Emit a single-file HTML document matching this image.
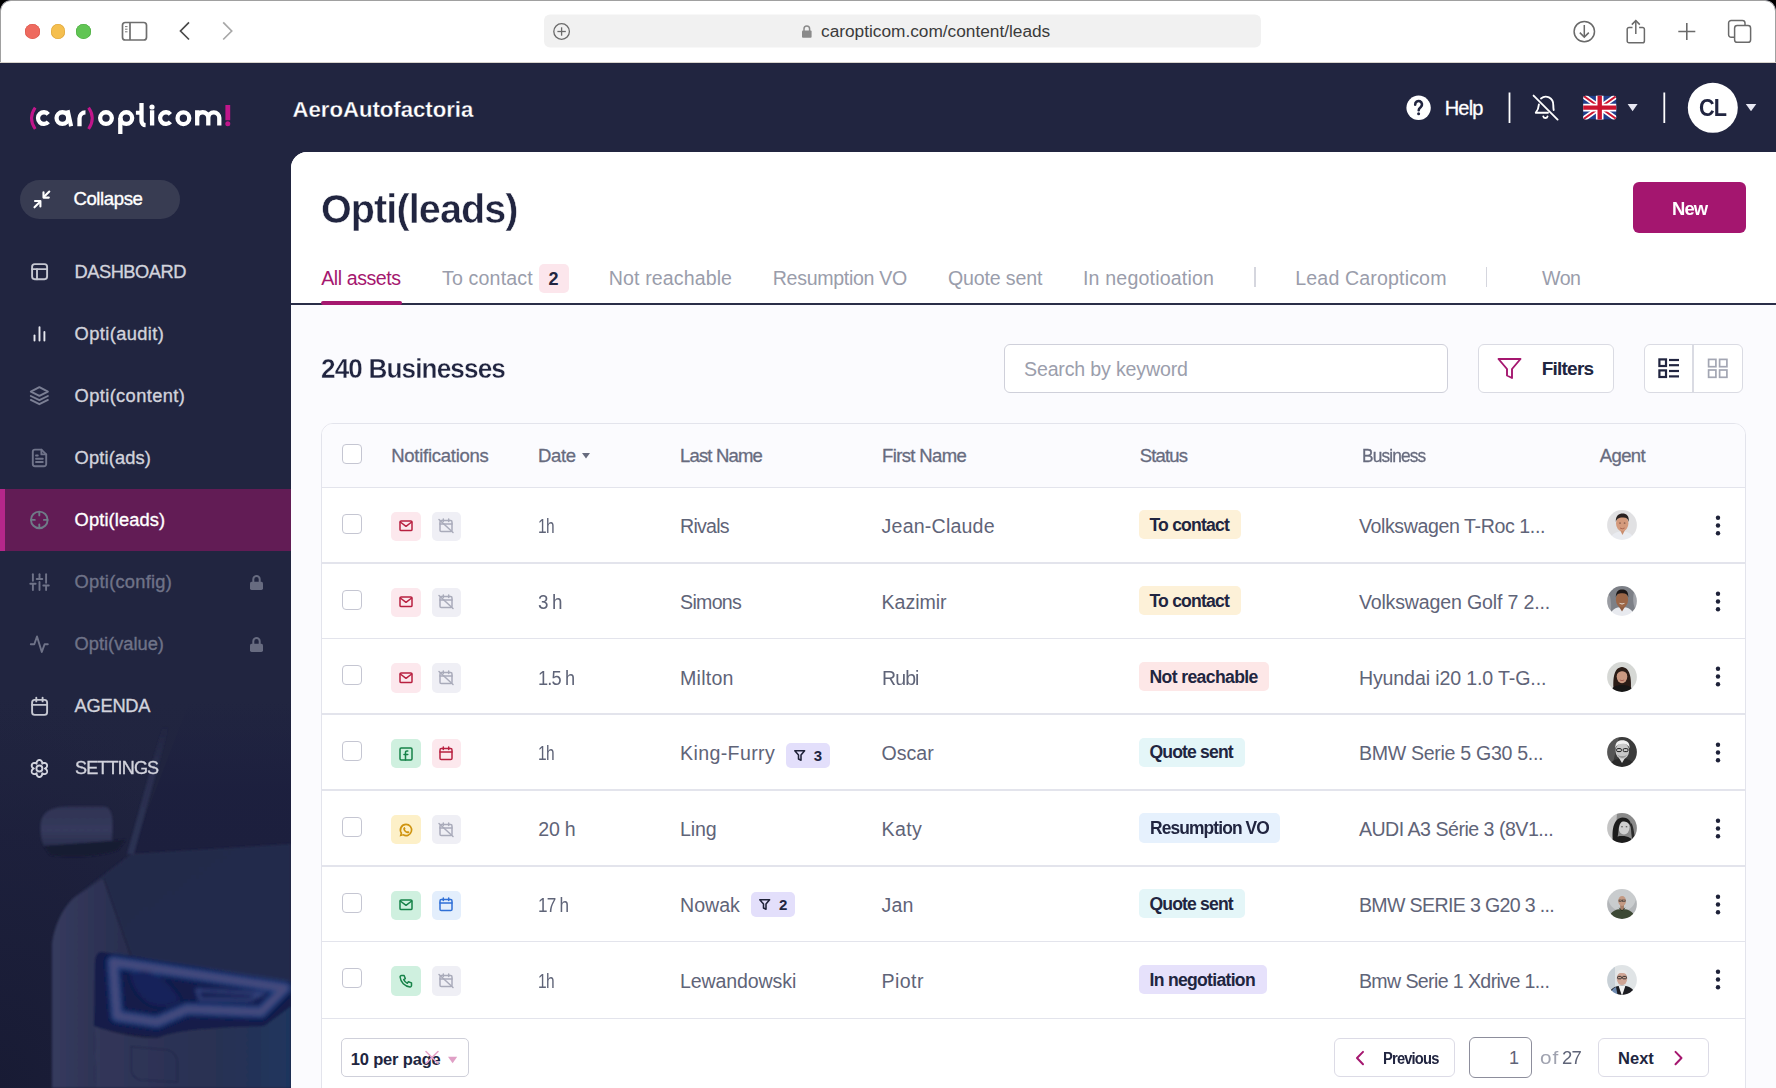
<!DOCTYPE html>
<html><head><meta charset="utf-8">
<style>
*{box-sizing:border-box;margin:0;padding:0}
html,body{width:1776px;height:1088px;overflow:hidden;background:#000;font-family:"Liberation Sans",sans-serif}
.a{position:absolute}
.t{position:absolute;white-space:nowrap}
svg{position:absolute;overflow:visible}
</style></head><body>
<div class="a" style="left:0;top:0;width:1776px;height:1088px;background:#212540;border-radius:11px 11px 0 0;overflow:hidden">

<div class="a" style="left:0;top:0;width:1776px;height:63px;background:#fff;border-radius:11px 11px 0 0;border:1px solid #a0a0a0;border-bottom:none"></div>
<div class="a" style="left:0;top:62px;width:1776px;height:1px;background:#d8d4cc"></div>
<div class="a" style="left:25.4px;top:24px;width:14.6px;height:14.6px;border-radius:50%;background:#ee6a5f;box-shadow:inset 0 0 0 0.6px #d9574c"></div>
<div class="a" style="left:50.7px;top:24px;width:14.6px;height:14.6px;border-radius:50%;background:#f5bf4f;box-shadow:inset 0 0 0 0.6px #dca53c"></div>
<div class="a" style="left:76.2px;top:24px;width:14.6px;height:14.6px;border-radius:50%;background:#61c554;box-shadow:inset 0 0 0 0.6px #4dab42"></div>
<svg style="left:0;top:0" width="1776" height="62"><rect x="122.5" y="22.5" width="24" height="17.5" rx="2.8" fill="none" stroke="#6e6e6e" stroke-width="1.7"/><line x1="130" y1="22.5" x2="130" y2="40" stroke="#6e6e6e" stroke-width="1.7"/><line x1="125" y1="26.6" x2="127.5" y2="26.6" stroke="#777" stroke-width="1"/><line x1="125" y1="29.2" x2="127.5" y2="29.2" stroke="#777" stroke-width="1"/><line x1="125" y1="31.8" x2="127.5" y2="31.8" stroke="#777" stroke-width="1"/><polyline points="189,22.3 180.5,31 189,39.5" fill="none" stroke="#4a4a4a" stroke-width="1.7"/><polyline points="223.2,22.3 231.7,31 223.2,39.5" fill="none" stroke="#a8a8a8" stroke-width="1.7"/><rect x="544" y="14.5" width="717" height="33" rx="6" fill="#f1f1f1"/><circle cx="561.6" cy="31.5" r="7.8" fill="none" stroke="#6a6a6a" stroke-width="1.3"/><line x1="561.6" y1="27.3" x2="561.6" y2="35.7" stroke="#6a6a6a" stroke-width="1.3"/><line x1="557.4" y1="31.5" x2="565.8" y2="31.5" stroke="#6a6a6a" stroke-width="1.3"/><path d="M804 31 v-2.2 a2.8 2.8 0 0 1 5.6 0 v2.2" fill="none" stroke="#8a8a8a" stroke-width="1.5"/><rect x="802" y="30.5" width="9.6" height="7.3" rx="1" fill="#8a8a8a"/><circle cx="1584.3" cy="31.6" r="10.2" fill="none" stroke="#6a6a6a" stroke-width="1.5"/><line x1="1584.3" y1="25" x2="1584.3" y2="37" stroke="#6a6a6a" stroke-width="1.5"/><polyline points="1579.8,32.6 1584.3,37.1 1588.8,32.6" fill="none" stroke="#6a6a6a" stroke-width="1.5"/><path d="M1632.5 27.5 h-3.5 a1.8 1.8 0 0 0 -1.8 1.8 v11.6 a1.8 1.8 0 0 0 1.8 1.8 h13.6 a1.8 1.8 0 0 0 1.8 -1.8 v-11.6 a1.8 1.8 0 0 0 -1.8 -1.8 h-3.5" fill="none" stroke="#6a6a6a" stroke-width="1.5"/><line x1="1635.8" y1="20.8" x2="1635.8" y2="34" stroke="#6a6a6a" stroke-width="1.5"/><polyline points="1631.8,24.6 1635.8,20.6 1639.8,24.6" fill="none" stroke="#6a6a6a" stroke-width="1.5"/><line x1="1686.8" y1="23" x2="1686.8" y2="40" stroke="#6a6a6a" stroke-width="1.6"/><line x1="1678.3" y1="31.5" x2="1695.3" y2="31.5" stroke="#6a6a6a" stroke-width="1.6"/><path d="M1734.6 37.3 H1731.2 a2.6 2.6 0 0 1 -2.6 -2.6 V23 a2.6 2.6 0 0 1 2.6 -2.6 H1742.4 a2.6 2.6 0 0 1 2.6 2.6 V25.6" fill="none" stroke="#6a6a6a" stroke-width="1.5"/><rect x="1734.6" y="25.6" width="16" height="16.7" rx="2.6" fill="none" stroke="#6a6a6a" stroke-width="1.5"/><path d="M1729 38 v-12" fill="none" stroke="#6a6a6a" stroke-width="0"/></svg>
<div class="t" style="left:821.00px;top:22.96px;font-size:17.3px;line-height:17.3px;color:#3b3b3b;font-weight:400;letter-spacing:-0.012px;">caropticom.com/content/leads</div>
<svg style="left:0;top:0" width="291" height="152"><g fill="none" stroke-width="4.3" stroke-linecap="butt" stroke-linejoin="round"><path d="M35.2 107.6 Q27.8 118.3 35.2 129" stroke="#c0168a" stroke-width="3"/><path d="M48.3 114.3 A5.85 5.85 0 1 0 48.3 121.9" stroke="#fff"/><circle cx="62.4" cy="118.1" r="5.85" stroke="#fff"/><line x1="67.6" y1="110.2" x2="71.1" y2="126.2" stroke="#fff" stroke-width="4.1"/><path d="M79.5 126.2 V118.5 A6 6 0 0 1 85.5 112.3" stroke="#fff"/><path d="M88.6 107.6 Q96 118.3 88.6 129" stroke="#c0168a" stroke-width="3"/><circle cx="106" cy="118.1" r="5.85" stroke="#fff"/><circle cx="126.3" cy="118.1" r="5.85" stroke="#fff"/><line x1="120.3" y1="118" x2="120.3" y2="133.9" stroke="#fff"/><path d="M141.5 102.9 V121 A4.2 4.2 0 0 0 145.6 125.2" stroke="#fff"/><line x1="135.9" y1="112.8" x2="143" y2="112.8" stroke="#fff" stroke-width="4"/><line x1="152.1" y1="110.3" x2="152.1" y2="125.4" stroke="#fff"/><circle cx="152" cy="107" r="2.6" fill="#fff" stroke="none"/><path d="M170.4 114.3 A5.85 5.85 0 1 0 170.4 121.9" stroke="#fff"/><circle cx="183.4" cy="118.2" r="5.85" stroke="#fff"/><path d="M197.2 125.4 V117.8 A5.55 5.55 0 0 1 208.3 117.8 V125.4 M208.3 117.8 A5.5 5.5 0 0 1 219.3 117.8 V125.4 M197.2 110.3 V118" stroke="#fff"/><line x1="227.8" y1="105" x2="227.8" y2="120.3" stroke="#c0168a" stroke-width="4.8"/><circle cx="227.8" cy="123.8" r="2.5" fill="#c0168a" stroke="none"/></g></svg>
<div class="t" style="left:292.50px;top:99.41px;font-size:22.2px;line-height:22.2px;color:#ffffff;font-weight:700;letter-spacing:-0.032px;-webkit-text-stroke:0.3px #212540;">AeroAutofactoria</div>
<svg style="left:0;top:0" width="1776" height="152"><circle cx="1418.6" cy="107.8" r="12.2" fill="#fff"/><path d="M1415.2 104.6 a3.4 3.4 0 1 1 5.6 2.4 c-1.3 1 -2.1 1.5 -2.1 3.3" fill="none" stroke="#212540" stroke-width="2.6" stroke-linecap="round"/><circle cx="1418.6" cy="113.7" r="1.5" fill="#212540"/><line x1="1509.5" y1="92.5" x2="1509.5" y2="123" stroke="#fff" stroke-width="1.8"/><line x1="1664.3" y1="92.5" x2="1664.3" y2="123" stroke="#fff" stroke-width="1.8"/><g fill="none" stroke="#fff" stroke-width="1.9" stroke-linecap="round" stroke-linejoin="round"><line x1="1533.6" y1="95.6" x2="1557.6" y2="119.6"/><path d="M1538.9 104.5 C1538.6 108 1537.8 110.5 1535.8 112.7 H1548"/><path d="M1541 98.4 C1545.5 94.8 1553.6 97 1553.3 105.5 C1553.3 107.5 1553.5 108.8 1553.7 110"/><path d="M1543.3 116.5 a2.2 2.2 0 0 0 4.2 0"/></g><defs><clipPath id="fl"><rect x="1583.2" y="95.8" width="33" height="23.6" rx="2.2"/></clipPath></defs><g clip-path="url(#fl)"><rect x="1583" y="95.5" width="34" height="24" fill="#203f8c"/><path d="M1583 95.5 L1617 119.5 M1617 95.5 L1583 119.5" stroke="#fff" stroke-width="5.2"/><path d="M1583 95.5 L1617 119.5 M1617 95.5 L1583 119.5" stroke="#cc1530" stroke-width="1.9"/><path d="M1599.7 95 V120 M1582 107.6 H1618" stroke="#fff" stroke-width="7.6"/><path d="M1599.7 95 V120 M1582 107.6 H1618" stroke="#cc1530" stroke-width="4.4"/></g><polygon points="1627.6,104 1637.6,104 1632.6,111.3" fill="#e8e8f3"/><circle cx="1712.8" cy="107.8" r="25" fill="#fff"/><polygon points="1745.8,104 1756.3,104 1751,111.3" fill="#e8e8f3"/></svg>
<div class="t" style="left:1444.80px;top:98.27px;font-size:20px;line-height:20px;color:#ffffff;font-weight:400;letter-spacing:-0.867px;-webkit-text-stroke:0.3px #fff;">Help</div>
<div class="t" style="left:1698.70px;top:96.28px;font-size:24px;line-height:24px;color:#212540;font-weight:700;letter-spacing:-0.900px;transform:scaleX(0.9024);transform-origin:0 0;">CL</div>
<svg style="left:0;top:700px" width="291" height="388" viewBox="0 700 291 388">
<defs>
 <linearGradient id="sbg" x1="0" y1="0" x2="0" y2="1"><stop offset="0" stop-color="#212540"/><stop offset="1" stop-color="#1c1f3b"/></linearGradient>
 <linearGradient id="fend" x1="0" y1="0" x2="1" y2="0"><stop offset="0" stop-color="#363b5e"/><stop offset="0.5" stop-color="#2f3456"/><stop offset="1" stop-color="#282d4e"/></linearGradient>
 <linearGradient id="hood" x1="0" y1="0" x2="1" y2="1"><stop offset="0" stop-color="#252a4a"/><stop offset="1" stop-color="#232a4c"/></linearGradient>
 <linearGradient id="bump" x1="0" y1="0" x2="1" y2="0"><stop offset="0" stop-color="#32375a"/><stop offset="0.6" stop-color="#293052"/><stop offset="1" stop-color="#1f365e"/></linearGradient>
 <linearGradient id="mir" x1="0" y1="0" x2="0" y2="1"><stop offset="0" stop-color="#2f3354"/><stop offset="0.6" stop-color="#353a5c"/><stop offset="1" stop-color="#2a2e4e"/></linearGradient>
 <radialGradient id="lft" cx="0" cy="1" r="1.1"><stop offset="0" stop-color="#181b34" stop-opacity="1"/><stop offset="0.6" stop-color="#1c1f3b" stop-opacity="0.7"/><stop offset="1" stop-color="#212540" stop-opacity="0"/></radialGradient>
 <filter id="glow" x="-20%" y="-50%" width="140%" height="200%"><feGaussianBlur stdDeviation="2.2"/></filter>
 <linearGradient id="wsg" x1="0" y1="0" x2="0" y2="1"><stop offset="0" stop-color="#1d2040" stop-opacity="0"/><stop offset="0.6" stop-color="#1c1f3e" stop-opacity="0.9"/><stop offset="1" stop-color="#1c1f3d"/></linearGradient>
 <linearGradient id="pil" x1="0" y1="0" x2="0" y2="1"><stop offset="0" stop-color="#2a2f50" stop-opacity="0"/><stop offset="0.4" stop-color="#2a2f50" stop-opacity="1"/><stop offset="1" stop-color="#2c3152"/></linearGradient>
 <filter id="bl1" x="-20%" y="-20%" width="140%" height="140%"><feGaussianBlur stdDeviation="1.2"/></filter>
 <filter id="bl3" x="-30%" y="-30%" width="160%" height="160%"><feGaussianBlur stdDeviation="3"/></filter>
</defs>
<rect x="0" y="700" width="291" height="388" fill="url(#sbg)"/>
<rect x="0" y="700" width="291" height="388" fill="url(#lft)"/>
<polygon points="190,700 291,700 291,846 131,854" fill="url(#wsg)"/>
<g filter="url(#bl1)">
 <polygon points="131,854 291,844 291,990 132,956 104,878 76,896" fill="url(#hood)"/>
 <path d="M76 896 L104 878 L132 956 L100 952 L94 1026 L96 1088 L52 1088 L52 945 C54 925 64 905 76 896Z" fill="url(#fend)"/>
 <path d="M94 1026 C120 1035 150 1040 160 1037 C175 1032 190 1028 264 1026 L291 1006 L291 1088 L96 1088Z" fill="url(#bump)"/>
 <path d="M100 952 L132 956 L291 982 L291 1006 L264 1026 C190 1028 175 1032 158 1037 C140 1036 110 1032 94 1026 L95 960 C96 955 98 953 100 952Z" fill="#121c4a"/>
 <g filter="url(#glow)"><path d="M113 962 L285 988 L261 1012 L187 1009 L157 1022 L117 1016Z" fill="none" stroke="#1d58a4" stroke-width="13" stroke-linejoin="round" opacity="0.55"/>
 <path d="M113 962 L285 988 L261 1012 L187 1009 L157 1022 L117 1016Z" fill="none" stroke="#444a7c" stroke-width="8" stroke-linejoin="round"/>
 <path d="M130 975 C150 960 175 990 180 1000 C165 1010 140 1010 130 975Z" fill="#14205a"/>
 <path d="M197 990 L262 994 L250 1000 L200 999Z" fill="none" stroke="#3b4a86" stroke-width="3"/></g>
 <path d="M40.5 826 C41 812 50 806.5 70 806.5 L104 806.5 C111 807 113 815 112.5 830 L112 841 L44 846 C41 840 40.5 834 40.5 826Z" fill="url(#mir)"/>
 <path d="M44 846 L112 841 L125.7 839.5 L118 850 C100 857 70 858 50 855Z" fill="#171a33"/>
 <polygon points="163,725 169,725 134,854 127,854" fill="url(#pil)"/>
 <line x1="103.4" y1="877.6" x2="130.7" y2="955.4" stroke="#1a1d36" stroke-width="1"/>
 <path d="M131 1046.6 L168 1050 C175 1052 177.4 1058 177.4 1064 L177.4 1082 L140 1080 C134 1078 131 1074 131 1068Z" fill="none" stroke="#23284a" stroke-width="1.2"/>
</g>
</svg>
<div class="a" style="left:20px;top:180px;width:160px;height:39px;border-radius:20px;background:#383c52"></div>
<svg style="left:27px;top:184px" width="30" height="30" viewBox="0 0 30 30"><g fill="none" stroke="#fff" stroke-width="2.1" stroke-linecap="round" stroke-linejoin="round"><line x1="22.3" y1="7.5" x2="17" y2="12.8"/><polyline points="16.5,8.3 16.5,13.6 21.8,13.6"/><line x1="7.5" y1="23.3" x2="12.8" y2="18"/><polyline points="8,17 13.4,17 13.4,22.4"/></g></svg>
<div class="t" style="left:73.40px;top:190.06px;font-size:18.6px;line-height:18.6px;color:#ffffff;font-weight:400;letter-spacing:-0.408px;-webkit-text-stroke:0.35px #fff;">Collapse</div>
<div class="a" style="left:0;top:489px;width:291px;height:62px;background:#621c55"></div>
<div class="a" style="left:0;top:489px;width:5px;height:62px;background:#b5278a"></div>
<div class="t" style="left:74.60px;top:263.11px;font-size:18.3px;line-height:18.3px;color:#d2d3dc;font-weight:400;letter-spacing:-0.504px;-webkit-text-stroke:0.35px #d2d3dc;">DASHBOARD</div>
<div class="t" style="left:74.60px;top:325.11px;font-size:18.3px;line-height:18.3px;color:#d2d3dc;font-weight:400;letter-spacing:0.394px;-webkit-text-stroke:0.35px #d2d3dc;">Opti(audit)</div>
<div class="t" style="left:74.60px;top:387.11px;font-size:18.3px;line-height:18.3px;color:#d2d3dc;font-weight:400;letter-spacing:0.377px;-webkit-text-stroke:0.35px #d2d3dc;">Opti(content)</div>
<div class="t" style="left:74.60px;top:449.11px;font-size:18.3px;line-height:18.3px;color:#d2d3dc;font-weight:400;letter-spacing:0.148px;-webkit-text-stroke:0.35px #d2d3dc;">Opti(ads)</div>
<div class="t" style="left:74.60px;top:511.11px;font-size:18.3px;line-height:18.3px;color:#ffffff;font-weight:400;letter-spacing:0.121px;-webkit-text-stroke:0.35px #ffffff;">Opti(leads)</div>
<div class="t" style="left:74.60px;top:573.11px;font-size:18.3px;line-height:18.3px;color:#6f7388;font-weight:400;letter-spacing:0.254px;-webkit-text-stroke:0.35px #6f7388;">Opti(config)</div>
<div class="t" style="left:74.60px;top:635.11px;font-size:18.3px;line-height:18.3px;color:#6f7388;font-weight:400;letter-spacing:-0.009px;-webkit-text-stroke:0.35px #6f7388;">Opti(value)</div>
<div class="t" style="left:74.60px;top:697.31px;font-size:18.3px;line-height:18.3px;color:#d2d3dc;font-weight:400;letter-spacing:-0.263px;-webkit-text-stroke:0.35px #d2d3dc;">AGENDA</div>
<div class="t" style="left:74.60px;top:759.31px;font-size:18.3px;line-height:18.3px;color:#d2d3dc;font-weight:400;letter-spacing:-0.900px;transform:scaleX(0.9883);transform-origin:0 0;-webkit-text-stroke:0.35px #d2d3dc;">SETTINGS</div>
<svg style="left:25px;top:255px" width="30" height="30" viewBox="0 0 30 30"><g fill="none" stroke-width="1.9" stroke-linecap="round" stroke-linejoin="round" stroke="#c6c8d2"><rect x="7.1" y="9.1" width="15" height="15.1" rx="2.6"/><line x1="7.1" y1="14.1" x2="22.1" y2="14.1"/><line x1="12" y1="14.1" x2="12" y2="24.2"/></g></svg>
<svg style="left:25px;top:318px" width="30" height="30" viewBox="0 0 30 30"><g fill="none" stroke-width="1.9" stroke-linecap="round" stroke-linejoin="round" stroke="#e6e7ee"><line x1="9.5" y1="17.4" x2="9.5" y2="22.6"/><line x1="14.5" y1="9.1" x2="14.5" y2="22.6"/><line x1="19.4" y1="14" x2="19.4" y2="22.6"/></g></svg>
<svg style="left:25px;top:380px" width="30" height="30" viewBox="0 0 30 30"><g fill="none" stroke-width="1.9" stroke-linecap="round" stroke-linejoin="round" stroke="#7b7f94"><polygon points="14.4,7.2 22.9,11.6 14.4,15.9 5.8,11.6"/><polyline points="5.8,16 14.4,20.2 22.9,16"/><polyline points="5.8,19.9 14.4,24.2 22.9,19.9"/></g></svg>
<svg style="left:25px;top:442px" width="30" height="30" viewBox="0 0 30 30"><g fill="none" stroke-width="1.9" stroke-linecap="round" stroke-linejoin="round" stroke="#70748a"><path d="M16.4 7.6 H10 a2.2 2.2 0 0 0 -2.2 2.2 V22 a2.2 2.2 0 0 0 2.2 2.2 H19 a2.2 2.2 0 0 0 2.2 -2.2 V12.4 Z"/><path d="M16.4 7.6 V12.4 H21.2"/><line x1="11" y1="13.5" x2="12.8" y2="13.5"/><line x1="11" y1="16.8" x2="17.8" y2="16.8"/><line x1="11" y1="20" x2="17.8" y2="20"/></g></svg>
<svg style="left:25px;top:504px" width="30" height="30" viewBox="0 0 30 30"><g fill="none" stroke-width="1.9" stroke-linecap="round" stroke-linejoin="round" stroke="#6f7b88"><circle cx="14.3" cy="15.9" r="8.3"/><line x1="14.3" y1="8" x2="14.3" y2="11.4"/><line x1="14.3" y1="20.4" x2="14.3" y2="23.8"/><line x1="6.2" y1="15.9" x2="9.8" y2="15.9"/><line x1="18.9" y1="15.9" x2="22.5" y2="15.9"/></g></svg>
<svg style="left:25px;top:567px" width="30" height="30" viewBox="0 0 30 30"><g fill="none" stroke-width="1.9" stroke-linecap="round" stroke-linejoin="round" stroke="#6f7388"><line x1="7.9" y1="7.3" x2="7.9" y2="13.8"/><line x1="7.9" y1="17.1" x2="7.9" y2="23.1"/><line x1="5.3" y1="16.7" x2="10.6" y2="16.7"/><line x1="14.5" y1="7.3" x2="14.5" y2="12"/><line x1="14.5" y1="15" x2="14.5" y2="23.1"/><line x1="11.7" y1="12" x2="17.3" y2="12"/><line x1="21.1" y1="7.3" x2="21.1" y2="15.7"/><line x1="21.1" y1="19" x2="21.1" y2="23.1"/><line x1="18.3" y1="18.5" x2="23.8" y2="18.5"/></g></svg>
<svg style="left:25px;top:629px" width="30" height="30" viewBox="0 0 30 30"><g fill="none" stroke-width="1.9" stroke-linecap="round" stroke-linejoin="round" stroke="#6f7388"><polyline points="5.8,15.3 9.3,15.3 12,7.5 16.8,23 19.6,15.3 22.8,15.3"/></g></svg>
<svg style="left:25px;top:691px" width="30" height="30" viewBox="0 0 30 30"><g fill="none" stroke-width="1.9" stroke-linecap="round" stroke-linejoin="round" stroke="#c6c8d2"><rect x="7.1" y="8.9" width="15" height="15" rx="2.6"/><line x1="7.1" y1="13.9" x2="22.1" y2="13.9"/><line x1="11.3" y1="6.7" x2="11.3" y2="10.4"/><line x1="17.6" y1="6.7" x2="17.6" y2="10.4"/></g></svg>
<svg style="left:25px;top:753px" width="30" height="30" viewBox="0 0 30 30"><g fill="none" stroke-width="1.9" stroke-linecap="round" stroke-linejoin="round" stroke="#d2d4de"><path d="M19.90 15.50 L20.64 15.83 L21.11 16.20 L21.47 16.62 L21.75 17.06 L21.95 17.52 L22.06 17.99 L22.10 18.46 L22.06 18.91 L21.95 19.35 L21.76 19.75 L21.51 20.11 L21.19 20.43 L20.81 20.69 L20.39 20.89 L19.92 21.02 L19.43 21.08 L18.91 21.06 L18.36 20.96 L17.80 20.74 L17.15 20.26 L17.24 21.07 L17.14 21.66 L16.97 22.18 L16.72 22.65 L16.42 23.05 L16.08 23.38 L15.69 23.65 L15.28 23.84 L14.84 23.96 L14.40 24.00 L13.96 23.96 L13.52 23.84 L13.11 23.65 L12.72 23.38 L12.38 23.05 L12.08 22.65 L11.83 22.18 L11.66 21.66 L11.56 21.07 L11.65 20.26 L11.00 20.74 L10.44 20.96 L9.89 21.06 L9.37 21.08 L8.88 21.02 L8.41 20.89 L7.99 20.69 L7.61 20.43 L7.29 20.11 L7.04 19.75 L6.85 19.35 L6.74 18.91 L6.70 18.46 L6.74 17.99 L6.85 17.52 L7.05 17.06 L7.33 16.62 L7.69 16.20 L8.16 15.83 L8.90 15.50 L8.16 15.17 L7.69 14.80 L7.33 14.38 L7.05 13.94 L6.85 13.48 L6.74 13.01 L6.70 12.54 L6.74 12.09 L6.85 11.65 L7.04 11.25 L7.29 10.89 L7.61 10.57 L7.99 10.31 L8.41 10.11 L8.88 9.98 L9.37 9.92 L9.89 9.94 L10.44 10.04 L11.00 10.26 L11.65 10.74 L11.56 9.93 L11.66 9.34 L11.83 8.82 L12.08 8.35 L12.38 7.95 L12.72 7.62 L13.11 7.35 L13.52 7.16 L13.96 7.04 L14.40 7.00 L14.84 7.04 L15.28 7.16 L15.69 7.35 L16.08 7.62 L16.42 7.95 L16.72 8.35 L16.97 8.82 L17.14 9.34 L17.24 9.93 L17.15 10.74 L17.80 10.26 L18.36 10.04 L18.91 9.94 L19.43 9.92 L19.92 9.98 L20.39 10.11 L20.81 10.31 L21.19 10.57 L21.51 10.89 L21.76 11.25 L21.95 11.65 L22.06 12.09 L22.10 12.54 L22.06 13.01 L21.95 13.48 L21.75 13.94 L21.47 14.38 L21.11 14.80 L20.64 15.17 L19.90 15.50 Z"/><circle cx="14.4" cy="15.5" r="3"/></g></svg>
<svg style="left:242px;top:567px" width="30" height="30" viewBox="0 0 30 30"><g fill="#676b80"><path d="M11.3 15 V12.2 a3.2 3.2 0 0 1 6.4 0 V15" fill="none" stroke="#676b80" stroke-width="2"/><rect x="8" y="14.8" width="13" height="8.1" rx="1.6"/></g></svg>
<svg style="left:242px;top:629px" width="30" height="30" viewBox="0 0 30 30"><g fill="#676b80"><path d="M11.3 15 V12.2 a3.2 3.2 0 0 1 6.4 0 V15" fill="none" stroke="#676b80" stroke-width="2"/><rect x="8" y="14.8" width="13" height="8.1" rx="1.6"/></g></svg>
<div class="a" style="left:291px;top:152px;width:1485px;height:936px;background:#fbfbfe;border-radius:16px 0 0 0;overflow:hidden"><div class="a" style="left:0;top:0;width:1485px;height:151px;background:#fff"></div><div class="a" style="left:0;top:151px;width:1485px;height:2px;background:#2a2e48"></div></div>
<div class="t" style="left:321.20px;top:189.34px;font-size:40px;line-height:40px;color:#212540;font-weight:700;letter-spacing:-0.900px;transform:scaleX(0.9880);transform-origin:0 0;-webkit-text-stroke:0.5px #fff;">Opti(leads)</div>
<div class="a" style="left:1633px;top:182px;width:113px;height:51px;border-radius:6px;background:#a4166f"></div>
<div class="t" style="left:1671.50px;top:199.84px;font-size:18.5px;line-height:18.5px;color:#ffffff;font-weight:700;letter-spacing:-0.900px;transform:scaleX(0.9970);transform-origin:0 0;">New</div>
<div class="t" style="left:321.20px;top:268.61px;font-size:19.6px;line-height:19.6px;color:#a5176f;font-weight:400;letter-spacing:-0.432px;">All assets</div>
<div class="t" style="left:442.00px;top:268.61px;font-size:19.6px;line-height:19.6px;color:#9a9dab;font-weight:400;letter-spacing:0.158px;">To contact</div>
<div class="t" style="left:608.80px;top:268.61px;font-size:19.6px;line-height:19.6px;color:#9a9dab;font-weight:400;letter-spacing:0.099px;">Not reachable</div>
<div class="t" style="left:772.80px;top:268.61px;font-size:19.6px;line-height:19.6px;color:#9a9dab;font-weight:400;letter-spacing:-0.331px;">Resumption VO</div>
<div class="t" style="left:948.00px;top:268.61px;font-size:19.6px;line-height:19.6px;color:#9a9dab;font-weight:400;letter-spacing:-0.160px;">Quote sent</div>
<div class="t" style="left:1083.00px;top:268.61px;font-size:19.6px;line-height:19.6px;color:#9a9dab;font-weight:400;letter-spacing:0.173px;">In negotioation</div>
<div class="t" style="left:1295.30px;top:268.61px;font-size:19.6px;line-height:19.6px;color:#9a9dab;font-weight:400;letter-spacing:0.139px;">Lead Caropticom</div>
<div class="t" style="left:1542.00px;top:268.61px;font-size:19.6px;line-height:19.6px;color:#9a9dab;font-weight:400;letter-spacing:-0.492px;">Won</div>
<div class="a" style="left:321px;top:300.5px;width:81px;height:4px;border-radius:2px;background:#a5176f"></div>
<div class="a" style="left:539px;top:264px;width:30px;height:29px;border-radius:5px;background:#fce6ec"></div>
<div class="t" style="left:548.50px;top:269.76px;font-size:18px;line-height:18px;color:#212540;font-weight:700;letter-spacing:0.000px;">2</div>
<div class="a" style="left:1254px;top:267px;width:1.6px;height:20px;background:#d5d6de"></div>
<div class="a" style="left:1485.5px;top:267px;width:1.6px;height:20px;background:#d5d6de"></div>
<div class="t" style="left:321.20px;top:355.30px;font-size:28px;line-height:28px;color:#212540;font-weight:700;letter-spacing:-0.900px;transform:scaleX(0.9313);transform-origin:0 0;-webkit-text-stroke:0.35px #fbfbfe;">240 Businesses</div>
<div class="a" style="left:1004px;top:344px;width:444px;height:49px;border-radius:6px;background:#fff;border:1.3px solid #cfd0da"></div>
<div class="t" style="left:1024.00px;top:360.21px;font-size:19.6px;line-height:19.6px;color:#9b9eac;font-weight:400;letter-spacing:-0.169px;">Search by keyword</div>
<div class="a" style="left:1477.5px;top:344px;width:136px;height:49px;border-radius:6px;background:#fff;border:1.3px solid #dadbe3"></div>
<svg style="left:1495px;top:355px" width="30" height="28" viewBox="0 0 30 28"><polygon points="3.5,4 25.5,4 17,14 17,23 12,20.5 12,14" fill="none" stroke="#a5176f" stroke-width="1.9" stroke-linejoin="round"/></svg>
<div class="t" style="left:1541.70px;top:359.42px;font-size:19px;line-height:19px;color:#212540;font-weight:700;letter-spacing:-0.767px;">Filters</div>
<div class="a" style="left:1644.4px;top:344px;width:98.5px;height:49px;border-radius:6px;background:#fff;border:1.3px solid #dadbe3"></div>
<div class="a" style="left:1692.4px;top:345px;width:1.3px;height:47px;background:#dadbe3"></div>
<svg style="left:1655px;top:355px" width="30" height="28" viewBox="0 0 30 28"><g fill="none" stroke="#212540" stroke-width="2.2"><rect x="4.4" y="4.4" width="6.6" height="6.6"/><rect x="4.4" y="15.4" width="6.6" height="6.6"/><line x1="14" y1="5" x2="24" y2="5"/><line x1="14" y1="10.2" x2="24" y2="10.2"/><line x1="14" y1="16" x2="24" y2="16"/><line x1="14" y1="21.4" x2="24" y2="21.4"/></g></svg>
<svg style="left:1704px;top:355px" width="30" height="28" viewBox="0 0 30 28"><g fill="none" stroke="#a3a6b3" stroke-width="1.7"><rect x="4.6" y="4.4" width="7.3" height="7.3"/><rect x="15.6" y="4.4" width="7.3" height="7.3"/><rect x="4.6" y="15" width="7.3" height="7.3"/><rect x="15.6" y="15" width="7.3" height="7.3"/></g></svg>
<div class="a" style="left:321px;top:423px;width:1425px;height:700px;border-radius:12px;background:#fff;border:1.5px solid #e3e4ec;overflow:hidden"><div class="a" style="left:0;top:0;width:1425px;height:64px;background:#fbfbfe;border-bottom:1.5px solid #e3e4ec"></div></div>
<div class="a" style="left:342px;top:444px;width:19.5px;height:20px;border-radius:4px;border:1.3px solid #c5c6d2;background:#fff"></div>
<div class="t" style="left:391.20px;top:447.14px;font-size:18.5px;line-height:18.5px;color:#676b7e;font-weight:400;letter-spacing:-0.261px;-webkit-text-stroke:0.3px #676b7e;">Notifications</div>
<div class="t" style="left:538.00px;top:447.14px;font-size:18.5px;line-height:18.5px;color:#676b7e;font-weight:400;letter-spacing:-0.345px;-webkit-text-stroke:0.3px #676b7e;">Date</div>
<div class="t" style="left:680.00px;top:447.14px;font-size:18.5px;line-height:18.5px;color:#676b7e;font-weight:400;letter-spacing:-0.831px;-webkit-text-stroke:0.3px #676b7e;">Last Name</div>
<div class="t" style="left:882.00px;top:447.14px;font-size:18.5px;line-height:18.5px;color:#676b7e;font-weight:400;letter-spacing:-0.629px;-webkit-text-stroke:0.3px #676b7e;">First Name</div>
<div class="t" style="left:1139.80px;top:447.14px;font-size:18.5px;line-height:18.5px;color:#676b7e;font-weight:400;letter-spacing:-0.869px;-webkit-text-stroke:0.3px #676b7e;">Status</div>
<div class="t" style="left:1361.70px;top:447.14px;font-size:18.5px;line-height:18.5px;color:#676b7e;font-weight:400;letter-spacing:-0.900px;transform:scaleX(0.9345);transform-origin:0 0;-webkit-text-stroke:0.3px #676b7e;">Business</div>
<div class="t" style="left:1599.80px;top:447.14px;font-size:18.5px;line-height:18.5px;color:#676b7e;font-weight:400;letter-spacing:-0.619px;-webkit-text-stroke:0.3px #676b7e;">Agent</div>
<svg style="left:580px;top:450px" width="12" height="12"><polygon points="2,3 10,3 6,8.5" fill="#676b7e"/></svg>
<div class="a" style="left:342px;top:513.5px;width:19.5px;height:20px;border-radius:4px;border:1.3px solid #c5c6d2;background:#fff"></div>
<div class="a" style="left:391.4px;top:511.5px;width:29.5px;height:29.5px;border-radius:5px;background:#fce8ed"></div>
<svg style="left:391.2px;top:511.3px" width="30" height="30" viewBox="0 0 30 30"><g fill="none" stroke="#b82040" stroke-width="1.5" stroke-linecap="round" stroke-linejoin="round"><rect x="9" y="10" width="12" height="9.6" rx="1.2"/><polyline points="9.3,11 15,15.3 20.7,11"/></g></svg>
<div class="a" style="left:431.6px;top:511.5px;width:29.5px;height:29.5px;border-radius:5px;background:#efeff5"></div>
<svg style="left:431.40000000000003px;top:511.3px" width="30" height="30" viewBox="0 0 30 30"><g fill="none" stroke="#a9abba" stroke-width="1.5" stroke-linecap="round" stroke-linejoin="round"><rect x="9" y="9.6" width="12" height="11" rx="1.3"/><line x1="9" y1="13" x2="21" y2="13"/><line x1="12.3" y1="8" x2="12.3" y2="10.5"/><line x1="17.7" y1="8" x2="17.7" y2="10.5"/><line x1="8" y1="8.5" x2="22" y2="21.5"/></g></svg>
<div class="t" style="left:538.20px;top:517.21px;font-size:19.6px;line-height:19.6px;color:#5f6478;font-weight:400;letter-spacing:-0.900px;transform:scaleX(0.7911);transform-origin:0 0;">1h</div>
<div class="t" style="left:680.00px;top:517.21px;font-size:19.6px;line-height:19.6px;color:#5f6478;font-weight:400;letter-spacing:-0.762px;">Rivals</div>
<div class="t" style="left:881.60px;top:517.21px;font-size:19.6px;line-height:19.6px;color:#5f6478;font-weight:400;letter-spacing:0.187px;">Jean-Claude</div>
<div class="a" style="left:1138.8px;top:510.2px;width:102.0px;height:29.3px;border-radius:5px;background:#fdf1d8"></div>
<div class="t" style="left:1149.50px;top:517.00px;font-size:17.6px;line-height:17.6px;color:#212540;font-weight:700;letter-spacing:-0.816px;">To contact</div>
<div class="t" style="left:1358.90px;top:517.21px;font-size:19.6px;line-height:19.6px;color:#5f6478;font-weight:400;letter-spacing:-0.406px;">Volkswagen T-Roc 1...</div>
<svg style="left:1606.8px;top:510.0px" width="30" height="30" viewBox="0 0 30 30"><defs><clipPath id="av0"><circle cx="15" cy="15" r="14.9"/></clipPath><filter id="avb0"><feGaussianBlur stdDeviation="0.45"/></filter></defs><g clip-path="url(#av0)"><g filter="url(#avb0)"><rect x="-2" y="-2" width="34" height="34" fill="#e1e1e3"/><path d="M2 32 C3 24 9 21.5 15 21.5 C21 21.5 27 24 28 32Z" fill="#e9ebf0"/><path d="M12.5 19 L15.5 25 L18.5 19Z" fill="#c98d6e"/><ellipse cx="15.2" cy="13.6" rx="6.2" ry="7.6" fill="#d49a7c"/><path d="M8.8 12 C8.6 5.5 12 3.6 15.5 3.6 C19.5 3.6 22.3 5.8 21.8 12 C21 8.5 19 7.3 15.5 7.6 C11.5 7.8 9.6 8.8 8.8 12Z" fill="#2b2320"/><ellipse cx="13" cy="13" rx="0.9" ry="0.5" fill="#5a3a30"/><ellipse cx="17.6" cy="13" rx="0.9" ry="0.5" fill="#5a3a30"/><path d="M13 18 Q15.3 19.5 17.6 18" stroke="#a9624d" stroke-width="0.9" fill="none"/></g></g></svg>
<svg style="left:1712px;top:513.5px" width="12" height="24"><circle cx="6" cy="3.8" r="2.2" fill="#1d2138"/><circle cx="6" cy="11.5" r="2.2" fill="#1d2138"/><circle cx="6" cy="19.2" r="2.2" fill="#1d2138"/></svg>
<div class="a" style="left:322px;top:562.0px;width:1423px;height:1.5px;background:#e3e4ec"></div>
<div class="a" style="left:342px;top:589.5px;width:19.5px;height:20px;border-radius:4px;border:1.3px solid #c5c6d2;background:#fff"></div>
<div class="a" style="left:391.4px;top:587.5px;width:29.5px;height:29.5px;border-radius:5px;background:#fce8ed"></div>
<svg style="left:391.2px;top:587.3px" width="30" height="30" viewBox="0 0 30 30"><g fill="none" stroke="#b82040" stroke-width="1.5" stroke-linecap="round" stroke-linejoin="round"><rect x="9" y="10" width="12" height="9.6" rx="1.2"/><polyline points="9.3,11 15,15.3 20.7,11"/></g></svg>
<div class="a" style="left:431.6px;top:587.5px;width:29.5px;height:29.5px;border-radius:5px;background:#efeff5"></div>
<svg style="left:431.40000000000003px;top:587.3px" width="30" height="30" viewBox="0 0 30 30"><g fill="none" stroke="#a9abba" stroke-width="1.5" stroke-linecap="round" stroke-linejoin="round"><rect x="9" y="9.6" width="12" height="11" rx="1.3"/><line x1="9" y1="13" x2="21" y2="13"/><line x1="12.3" y1="8" x2="12.3" y2="10.5"/><line x1="17.7" y1="8" x2="17.7" y2="10.5"/><line x1="8" y1="8.5" x2="22" y2="21.5"/></g></svg>
<div class="t" style="left:538.20px;top:592.97px;font-size:19.6px;line-height:19.6px;color:#5f6478;font-weight:400;letter-spacing:-0.900px;transform:scaleX(0.9629);transform-origin:0 0;">3 h</div>
<div class="t" style="left:680.00px;top:592.97px;font-size:19.6px;line-height:19.6px;color:#5f6478;font-weight:400;letter-spacing:-0.693px;">Simons</div>
<div class="t" style="left:881.60px;top:592.97px;font-size:19.6px;line-height:19.6px;color:#5f6478;font-weight:400;letter-spacing:-0.044px;">Kazimir</div>
<div class="a" style="left:1138.8px;top:586.2px;width:102.0px;height:29.3px;border-radius:5px;background:#fdf1d8"></div>
<div class="t" style="left:1149.50px;top:592.76px;font-size:17.6px;line-height:17.6px;color:#212540;font-weight:700;letter-spacing:-0.816px;">To contact</div>
<div class="t" style="left:1358.90px;top:592.97px;font-size:19.6px;line-height:19.6px;color:#5f6478;font-weight:400;letter-spacing:-0.172px;">Volkswagen Golf 7 2...</div>
<svg style="left:1606.8px;top:586.0px" width="30" height="30" viewBox="0 0 30 30"><defs><clipPath id="av1"><circle cx="15" cy="15" r="14.9"/></clipPath><filter id="avb1"><feGaussianBlur stdDeviation="0.45"/></filter></defs><g clip-path="url(#av1)"><g filter="url(#avb1)"><rect x="-2" y="-2" width="34" height="34" fill="#7d8087"/><path d="M3 10 C5 20 4 26 3 30 L0 30 L0 8Z" fill="#9a9ca2"/><path d="M27 6 C25 15 27 22 30 26 L30 4Z" fill="#a2a4aa"/><path d="M2 32 C3 24 9 21 15 21 C21 21 27 24 28 32Z" fill="#e8eaef"/><path d="M11.5 20 L15 25.5 L18.5 20Z" fill="#8c5a3f"/><ellipse cx="15" cy="13.8" rx="6.1" ry="7.7" fill="#9c6647"/><path d="M8.8 11.5 C8.8 5 12 3.5 15 3.5 C18.5 3.5 21.6 5 21.3 11.5 C20.5 8 18.5 7 15 7.2 C11.5 7.2 9.5 8 8.8 11.5Z" fill="#1e1816"/><path d="M11.8 16.8 Q15 20 18.3 16.8 Q15 18 11.8 16.8Z" fill="#f3efe8"/></g></g></svg>
<svg style="left:1712px;top:589.5px" width="12" height="24"><circle cx="6" cy="3.8" r="2.2" fill="#1d2138"/><circle cx="6" cy="11.5" r="2.2" fill="#1d2138"/><circle cx="6" cy="19.2" r="2.2" fill="#1d2138"/></svg>
<div class="a" style="left:322px;top:637.6px;width:1423px;height:1.5px;background:#e3e4ec"></div>
<div class="a" style="left:342px;top:665.1px;width:19.5px;height:20px;border-radius:4px;border:1.3px solid #c5c6d2;background:#fff"></div>
<div class="a" style="left:391.4px;top:663.1px;width:29.5px;height:29.5px;border-radius:5px;background:#fce8ed"></div>
<svg style="left:391.2px;top:662.9px" width="30" height="30" viewBox="0 0 30 30"><g fill="none" stroke="#b82040" stroke-width="1.5" stroke-linecap="round" stroke-linejoin="round"><rect x="9" y="10" width="12" height="9.6" rx="1.2"/><polyline points="9.3,11 15,15.3 20.7,11"/></g></svg>
<div class="a" style="left:431.6px;top:663.1px;width:29.5px;height:29.5px;border-radius:5px;background:#efeff5"></div>
<svg style="left:431.40000000000003px;top:662.9px" width="30" height="30" viewBox="0 0 30 30"><g fill="none" stroke="#a9abba" stroke-width="1.5" stroke-linecap="round" stroke-linejoin="round"><rect x="9" y="9.6" width="12" height="11" rx="1.3"/><line x1="9" y1="13" x2="21" y2="13"/><line x1="12.3" y1="8" x2="12.3" y2="10.5"/><line x1="17.7" y1="8" x2="17.7" y2="10.5"/><line x1="8" y1="8.5" x2="22" y2="21.5"/></g></svg>
<div class="t" style="left:538.20px;top:668.73px;font-size:19.6px;line-height:19.6px;color:#5f6478;font-weight:400;letter-spacing:-0.900px;transform:scaleX(0.9298);transform-origin:0 0;">1.5 h</div>
<div class="t" style="left:680.00px;top:668.73px;font-size:19.6px;line-height:19.6px;color:#5f6478;font-weight:400;letter-spacing:0.234px;">Milton</div>
<div class="t" style="left:881.60px;top:668.73px;font-size:19.6px;line-height:19.6px;color:#5f6478;font-weight:400;letter-spacing:-0.900px;transform:scaleX(0.9953);transform-origin:0 0;">Rubi</div>
<div class="a" style="left:1138.8px;top:661.8px;width:130.6px;height:29.3px;border-radius:5px;background:#fde7e7"></div>
<div class="t" style="left:1149.50px;top:668.52px;font-size:17.6px;line-height:17.6px;color:#212540;font-weight:700;letter-spacing:-0.627px;">Not reachable</div>
<div class="t" style="left:1358.90px;top:668.73px;font-size:19.6px;line-height:19.6px;color:#5f6478;font-weight:400;letter-spacing:-0.129px;">Hyundai i20 1.0 T-G...</div>
<svg style="left:1606.8px;top:661.6px" width="30" height="30" viewBox="0 0 30 30"><defs><clipPath id="av2"><circle cx="15" cy="15" r="14.9"/></clipPath><filter id="avb2"><feGaussianBlur stdDeviation="0.45"/></filter></defs><g clip-path="url(#av2)"><g filter="url(#avb2)"><rect x="-2" y="-2" width="34" height="34" fill="#d6d8d5"/><path d="M6.5 26 C6 16 7 5.5 15 5 C23 5.5 24.5 16 24 26 L27 31 L3 31Z" fill="#2a1b16"/><path d="M2 32 C4 25 9 23 15 23 C21 23 26 25 28 32Z" fill="#151214"/><ellipse cx="15" cy="14.5" rx="5.3" ry="6.8" fill="#c99880"/><path d="M9.5 13 C10 7.5 13 6.5 15.5 6.8 C19 7 20.5 9 20.6 13 C19.5 10 17 9 14.5 9.3 C12 9.6 10.5 10.8 9.5 13Z" fill="#2a1b16"/><path d="M12.8 18 Q15 19.3 17.2 18" stroke="#a45a50" stroke-width="0.9" fill="none"/></g></g></svg>
<svg style="left:1712px;top:665.1px" width="12" height="24"><circle cx="6" cy="3.8" r="2.2" fill="#1d2138"/><circle cx="6" cy="11.5" r="2.2" fill="#1d2138"/><circle cx="6" cy="19.2" r="2.2" fill="#1d2138"/></svg>
<div class="a" style="left:322px;top:713.4px;width:1423px;height:1.5px;background:#e3e4ec"></div>
<div class="a" style="left:342px;top:740.9px;width:19.5px;height:20px;border-radius:4px;border:1.3px solid #c5c6d2;background:#fff"></div>
<div class="a" style="left:391.4px;top:738.9px;width:29.5px;height:29.5px;border-radius:5px;background:#cff0df"></div>
<svg style="left:391.2px;top:738.7px" width="30" height="30" viewBox="0 0 30 30"><g fill="none" stroke="#178249" stroke-width="1.5" stroke-linecap="round" stroke-linejoin="round"><rect x="9" y="9" width="12" height="12" rx="1.2"/><path d="M16.8 12 h-1 a1.3 1.3 0 0 0 -1.3 1.3 V21 M13 15.4 h3.8"/></g></svg>
<div class="a" style="left:431.6px;top:738.9px;width:29.5px;height:29.5px;border-radius:5px;background:#fce8ed"></div>
<svg style="left:431.40000000000003px;top:738.7px" width="30" height="30" viewBox="0 0 30 30"><g fill="none" stroke="#b82040" stroke-width="1.5" stroke-linecap="round" stroke-linejoin="round"><rect x="9" y="9.6" width="12" height="11" rx="1.3"/><line x1="9" y1="13" x2="21" y2="13"/><line x1="12.3" y1="8" x2="12.3" y2="10.5"/><line x1="17.7" y1="8" x2="17.7" y2="10.5"/></g></svg>
<div class="t" style="left:538.20px;top:744.49px;font-size:19.6px;line-height:19.6px;color:#5f6478;font-weight:400;letter-spacing:-0.900px;transform:scaleX(0.7911);transform-origin:0 0;">1h</div>
<div class="t" style="left:680.00px;top:744.49px;font-size:19.6px;line-height:19.6px;color:#5f6478;font-weight:400;letter-spacing:0.363px;">King-Furry</div>
<div class="a" style="left:786.1px;top:742.7px;width:43.7px;height:25.6px;border-radius:5px;background:#e3dffb"></div>
<svg style="left:793.9px;top:749.9000000000001px" width="12" height="12" viewBox="0 0 12 12"><path d="M0.8 0.8 H10.6 L7 5 V10.2 L4.5 9 V5 Z" fill="none" stroke="#1f2238" stroke-width="1.55" stroke-linejoin="round"/></svg>
<div class="t" style="left:813.80px;top:748.15px;font-size:15px;line-height:15px;color:#212540;font-weight:700;letter-spacing:0.000px;">3</div>
<div class="t" style="left:881.60px;top:744.49px;font-size:19.6px;line-height:19.6px;color:#5f6478;font-weight:400;letter-spacing:-0.033px;">Oscar</div>
<div class="a" style="left:1138.8px;top:737.6px;width:105.9px;height:29.3px;border-radius:5px;background:#e4f6f8"></div>
<div class="t" style="left:1149.50px;top:744.28px;font-size:17.6px;line-height:17.6px;color:#212540;font-weight:700;letter-spacing:-0.862px;">Quote sent</div>
<div class="t" style="left:1358.90px;top:744.49px;font-size:19.6px;line-height:19.6px;color:#5f6478;font-weight:400;letter-spacing:-0.316px;">BMW Serie 5 G30 5...</div>
<svg style="left:1606.8px;top:737.4px" width="30" height="30" viewBox="0 0 30 30"><defs><clipPath id="av3"><circle cx="15" cy="15" r="14.9"/></clipPath><filter id="avb3"><feGaussianBlur stdDeviation="0.45"/></filter></defs><g clip-path="url(#av3)"><g filter="url(#avb3)"><rect x="-2" y="-2" width="34" height="34" fill="#3a3a3a"/><path d="M0 0 L12 0 L5 30 L0 30Z" fill="#555"/><path d="M1 32 C3 24 8 21.5 15 21.5 C22 21.5 27 24 29 32Z" fill="#2a2a2a"/><path d="M12 21 L15 26 L18 21Z" fill="#dcdcdc"/><ellipse cx="15.3" cy="14" rx="6.8" ry="8" fill="#c8c8c8"/><path d="M8.3 11.5 C8 4.5 12 3.2 15.3 3.2 C19.5 3.2 23 5 22.6 11.5 C21.5 8 19 6.6 15.3 6.8 C11.5 7 9.5 8.2 8.3 11.5Z" fill="#f0f0f0"/><rect x="9.6" y="11.6" width="4.8" height="3" rx="1.2" fill="none" stroke="#1a1a1a" stroke-width="1"/><rect x="16.2" y="11.6" width="4.8" height="3" rx="1.2" fill="none" stroke="#1a1a1a" stroke-width="1"/><path d="M10.5 17.5 C12 22 18.5 22 20 17.5 C18.5 19.5 12 19.5 10.5 17.5Z" fill="#9a9a9a"/></g></g></svg>
<svg style="left:1712px;top:740.9px" width="12" height="24"><circle cx="6" cy="3.8" r="2.2" fill="#1d2138"/><circle cx="6" cy="11.5" r="2.2" fill="#1d2138"/><circle cx="6" cy="19.2" r="2.2" fill="#1d2138"/></svg>
<div class="a" style="left:322px;top:789.2px;width:1423px;height:1.5px;background:#e3e4ec"></div>
<div class="a" style="left:342px;top:816.7px;width:19.5px;height:20px;border-radius:4px;border:1.3px solid #c5c6d2;background:#fff"></div>
<div class="a" style="left:391.4px;top:814.7px;width:29.5px;height:29.5px;border-radius:5px;background:#fdf0c8"></div>
<svg style="left:391.2px;top:814.5px" width="30" height="30" viewBox="0 0 30 30"><g fill="#cf9410"><path d="M15 8.6 a6.4 6.4 0 0 0 -5.5 9.7 l-0.9 3.2 3.3 -0.9 a6.4 6.4 0 1 0 3.1 -12 z M15 10.2 a4.8 4.8 0 1 1 -2.5 8.9 l-1.7 0.5 0.5 -1.7 a4.8 4.8 0 0 1 3.7 -7.7z"/><path d="M12.9 12.4 c0.3 -0.4 0.8 -0.4 1 0 l0.6 1.2 c0.1 0.3 -0.3 0.7 -0.5 0.9 c0.4 0.9 1.2 1.7 2.1 2.1 c0.2 -0.2 0.6 -0.6 0.9 -0.5 l1.2 0.6 c0.4 0.2 0.3 0.7 0 1 c-0.6 0.7 -1.6 0.8 -2.6 0.3 c-1.4 -0.7 -2.5 -1.8 -3.1 -3.1 c-0.5 -1 -0.3 -2 0.4 -2.5z"/></g></svg>
<div class="a" style="left:431.6px;top:814.7px;width:29.5px;height:29.5px;border-radius:5px;background:#efeff5"></div>
<svg style="left:431.40000000000003px;top:814.5px" width="30" height="30" viewBox="0 0 30 30"><g fill="none" stroke="#a9abba" stroke-width="1.5" stroke-linecap="round" stroke-linejoin="round"><rect x="9" y="9.6" width="12" height="11" rx="1.3"/><line x1="9" y1="13" x2="21" y2="13"/><line x1="12.3" y1="8" x2="12.3" y2="10.5"/><line x1="17.7" y1="8" x2="17.7" y2="10.5"/><line x1="8" y1="8.5" x2="22" y2="21.5"/></g></svg>
<div class="t" style="left:538.20px;top:820.25px;font-size:19.6px;line-height:19.6px;color:#5f6478;font-weight:400;letter-spacing:-0.207px;">20 h</div>
<div class="t" style="left:680.00px;top:820.25px;font-size:19.6px;line-height:19.6px;color:#5f6478;font-weight:400;letter-spacing:-0.148px;">Ling</div>
<div class="t" style="left:881.60px;top:820.25px;font-size:19.6px;line-height:19.6px;color:#5f6478;font-weight:400;letter-spacing:0.333px;">Katy</div>
<div class="a" style="left:1138.8px;top:813.4px;width:141.6px;height:29.3px;border-radius:5px;background:#e6f1fd"></div>
<div class="t" style="left:1149.50px;top:820.04px;font-size:17.6px;line-height:17.6px;color:#212540;font-weight:700;letter-spacing:-0.900px;transform:scaleX(0.9893);transform-origin:0 0;">Resumption VO</div>
<div class="t" style="left:1358.90px;top:820.25px;font-size:19.6px;line-height:19.6px;color:#5f6478;font-weight:400;letter-spacing:-0.504px;">AUDI A3 Série 3 (8V1...</div>
<svg style="left:1606.8px;top:813.2px" width="30" height="30" viewBox="0 0 30 30"><defs><clipPath id="av4"><circle cx="15" cy="15" r="14.9"/></clipPath><filter id="avb4"><feGaussianBlur stdDeviation="0.45"/></filter></defs><g clip-path="url(#av4)"><g filter="url(#avb4)"><rect x="-2" y="-2" width="34" height="34" fill="#8a8a8a"/><path d="M0 0 L10 0 L8 30 L0 30Z" fill="#c4c4c4"/><path d="M2 32 C4 25 9 23 15 23 C21 23 26 25 28 32Z" fill="#1c1c1c"/><ellipse cx="17" cy="14.5" rx="5.5" ry="7" fill="#cfcfcf"/><path d="M6 28 C4.5 16 7 5 15.5 4.5 C22 4.5 24.5 9 24 14 C22 9.5 19 8.5 16 8.5 C13 9 12 13 11.5 18 C11 23 10 27 9 30Z" fill="#1e1e1e"/><path d="M23.5 12 C24.5 18 24 24 26 29 L29 29 C27 22 27 15 24.5 10Z" fill="#2a2a2a"/><ellipse cx="15" cy="13.8" rx="0.9" ry="0.5" fill="#333"/><ellipse cx="19.5" cy="13.8" rx="0.9" ry="0.5" fill="#333"/></g></g></svg>
<svg style="left:1712px;top:816.7px" width="12" height="24"><circle cx="6" cy="3.8" r="2.2" fill="#1d2138"/><circle cx="6" cy="11.5" r="2.2" fill="#1d2138"/><circle cx="6" cy="19.2" r="2.2" fill="#1d2138"/></svg>
<div class="a" style="left:322px;top:865.0px;width:1423px;height:1.5px;background:#e3e4ec"></div>
<div class="a" style="left:342px;top:892.5px;width:19.5px;height:20px;border-radius:4px;border:1.3px solid #c5c6d2;background:#fff"></div>
<div class="a" style="left:391.4px;top:890.5px;width:29.5px;height:29.5px;border-radius:5px;background:#cff0df"></div>
<svg style="left:391.2px;top:890.3px" width="30" height="30" viewBox="0 0 30 30"><g fill="none" stroke="#178249" stroke-width="1.5" stroke-linecap="round" stroke-linejoin="round"><rect x="9" y="10" width="12" height="9.6" rx="1.2"/><polyline points="9.3,11 15,15.3 20.7,11"/></g></svg>
<div class="a" style="left:431.6px;top:890.5px;width:29.5px;height:29.5px;border-radius:5px;background:#e3eefc"></div>
<svg style="left:431.40000000000003px;top:890.3px" width="30" height="30" viewBox="0 0 30 30"><g fill="none" stroke="#2f6fd6" stroke-width="1.5" stroke-linecap="round" stroke-linejoin="round"><rect x="9" y="9.6" width="12" height="11" rx="1.3"/><line x1="9" y1="13" x2="21" y2="13"/><line x1="12.3" y1="8" x2="12.3" y2="10.5"/><line x1="17.7" y1="8" x2="17.7" y2="10.5"/></g></svg>
<div class="t" style="left:538.20px;top:896.01px;font-size:19.6px;line-height:19.6px;color:#5f6478;font-weight:400;letter-spacing:-0.900px;transform:scaleX(0.8752);transform-origin:0 0;">17 h</div>
<div class="t" style="left:680.00px;top:896.01px;font-size:19.6px;line-height:19.6px;color:#5f6478;font-weight:400;letter-spacing:0.006px;">Nowak</div>
<div class="a" style="left:751.3px;top:891.9px;width:43.6px;height:25.6px;border-radius:5px;background:#e3dffb"></div>
<svg style="left:759.0999999999999px;top:899.1px" width="12" height="12" viewBox="0 0 12 12"><path d="M0.8 0.8 H10.6 L7 5 V10.2 L4.5 9 V5 Z" fill="none" stroke="#1f2238" stroke-width="1.55" stroke-linejoin="round"/></svg>
<div class="t" style="left:779.00px;top:897.35px;font-size:15px;line-height:15px;color:#212540;font-weight:700;letter-spacing:0.000px;">2</div>
<div class="t" style="left:881.60px;top:896.01px;font-size:19.6px;line-height:19.6px;color:#5f6478;font-weight:400;letter-spacing:0.122px;">Jan</div>
<div class="a" style="left:1138.8px;top:889.2px;width:105.9px;height:29.3px;border-radius:5px;background:#e4f6f8"></div>
<div class="t" style="left:1149.50px;top:895.80px;font-size:17.6px;line-height:17.6px;color:#212540;font-weight:700;letter-spacing:-0.862px;">Quote sent</div>
<div class="t" style="left:1358.90px;top:896.01px;font-size:19.6px;line-height:19.6px;color:#5f6478;font-weight:400;letter-spacing:-0.657px;">BMW SERIE 3 G20 3 ...</div>
<svg style="left:1606.8px;top:889.0px" width="30" height="30" viewBox="0 0 30 30"><defs><clipPath id="av5"><circle cx="15" cy="15" r="14.9"/></clipPath><filter id="avb5"><feGaussianBlur stdDeviation="0.45"/></filter></defs><g clip-path="url(#av5)"><g filter="url(#avb5)"><rect x="-2" y="-2" width="34" height="34" fill="#b3b6b9"/><circle cx="15" cy="8" r="14" fill="#c9ccce"/><path d="M1 32 C2 23 8 20 15 20 C22 20 28 23 29 32Z" fill="#3e4834"/><rect x="13.2" y="16" width="3.8" height="5" fill="#a8806a"/><ellipse cx="15.1" cy="12" rx="3.9" ry="5" fill="#c49a84"/><path d="M12.3 18.8 L15 22 L17.8 18.8" stroke="#2e3626" stroke-width="1" fill="none"/><rect x="12" y="11" width="2.6" height="1.4" fill="none" stroke="#333" stroke-width="0.6"/><rect x="15.6" y="11" width="2.6" height="1.4" fill="none" stroke="#333" stroke-width="0.6"/></g></g></svg>
<svg style="left:1712px;top:892.5px" width="12" height="24"><circle cx="6" cy="3.8" r="2.2" fill="#1d2138"/><circle cx="6" cy="11.5" r="2.2" fill="#1d2138"/><circle cx="6" cy="19.2" r="2.2" fill="#1d2138"/></svg>
<div class="a" style="left:322px;top:940.8px;width:1423px;height:1.5px;background:#e3e4ec"></div>
<div class="a" style="left:342px;top:968.3px;width:19.5px;height:20px;border-radius:4px;border:1.3px solid #c5c6d2;background:#fff"></div>
<div class="a" style="left:391.4px;top:966.3px;width:29.5px;height:29.5px;border-radius:5px;background:#cff0df"></div>
<svg style="left:391.2px;top:966.1px" width="30" height="30" viewBox="0 0 30 30"><g fill="none" stroke="#178249" stroke-width="1.5" stroke-linecap="round" stroke-linejoin="round"><path d="M10.5 9.5 h2.6 l1.2 3.1 -1.6 1.1 a8 8 0 0 0 3.6 3.6 l1.1 -1.6 3.1 1.2 v2.6 a1.4 1.4 0 0 1 -1.5 1.4 A11 11 0 0 1 9.1 11 a1.4 1.4 0 0 1 1.4 -1.5z"/></g></svg>
<div class="a" style="left:431.6px;top:966.3px;width:29.5px;height:29.5px;border-radius:5px;background:#efeff5"></div>
<svg style="left:431.40000000000003px;top:966.1px" width="30" height="30" viewBox="0 0 30 30"><g fill="none" stroke="#a9abba" stroke-width="1.5" stroke-linecap="round" stroke-linejoin="round"><rect x="9" y="9.6" width="12" height="11" rx="1.3"/><line x1="9" y1="13" x2="21" y2="13"/><line x1="12.3" y1="8" x2="12.3" y2="10.5"/><line x1="17.7" y1="8" x2="17.7" y2="10.5"/><line x1="8" y1="8.5" x2="22" y2="21.5"/></g></svg>
<div class="t" style="left:538.20px;top:971.77px;font-size:19.6px;line-height:19.6px;color:#5f6478;font-weight:400;letter-spacing:-0.900px;transform:scaleX(0.7911);transform-origin:0 0;">1h</div>
<div class="t" style="left:680.00px;top:971.77px;font-size:19.6px;line-height:19.6px;color:#5f6478;font-weight:400;letter-spacing:-0.140px;">Lewandowski</div>
<div class="t" style="left:881.60px;top:971.77px;font-size:19.6px;line-height:19.6px;color:#5f6478;font-weight:400;letter-spacing:0.380px;">Piotr</div>
<div class="a" style="left:1138.8px;top:965.0px;width:127.9px;height:29.3px;border-radius:5px;background:#e6e1fb"></div>
<div class="t" style="left:1149.50px;top:971.56px;font-size:17.6px;line-height:17.6px;color:#212540;font-weight:700;letter-spacing:-0.705px;">In negotiation</div>
<div class="t" style="left:1358.90px;top:971.77px;font-size:19.6px;line-height:19.6px;color:#5f6478;font-weight:400;letter-spacing:-0.624px;">Bmw Serie 1 Xdrive 1...</div>
<svg style="left:1606.8px;top:964.8px" width="30" height="30" viewBox="0 0 30 30"><defs><clipPath id="av6"><circle cx="15" cy="15" r="14.9"/></clipPath><filter id="avb6"><feGaussianBlur stdDeviation="0.45"/></filter></defs><g clip-path="url(#av6)"><g filter="url(#avb6)"><rect x="-2" y="-2" width="34" height="34" fill="#e0e4e6"/><rect x="0" y="0" width="8" height="30" fill="#c8d0d6"/><path d="M1 32 C2 24 8 20.5 15 20.5 C22 20.5 28 24 29 32Z" fill="#1b1c22"/><path d="M3 32 C3.5 26 6 23 9 22 L11 32Z" fill="#6e8ab0"/><path d="M11.5 20.5 L15 31 L18.5 20.5Z" fill="#f2f2f2"/><ellipse cx="15" cy="13.5" rx="5.2" ry="6.6" fill="#cfa595"/><path d="M9.6 11 C9.5 5.5 12.5 4.8 15 4.8 C18 4.8 20.6 5.8 20.4 11 C19.5 8.5 18 7.8 15 8 C12 8 10.5 8.5 9.6 11Z" fill="#e8e8e8"/><rect x="10.6" y="11.4" width="3.8" height="2.4" rx="0.8" fill="none" stroke="#222" stroke-width="0.9"/><rect x="15.6" y="11.4" width="3.8" height="2.4" rx="0.8" fill="none" stroke="#222" stroke-width="0.9"/></g></g></svg>
<svg style="left:1712px;top:968.3px" width="12" height="24"><circle cx="6" cy="3.8" r="2.2" fill="#1d2138"/><circle cx="6" cy="11.5" r="2.2" fill="#1d2138"/><circle cx="6" cy="19.2" r="2.2" fill="#1d2138"/></svg>
<div class="a" style="left:322px;top:1017.5px;width:1423px;height:1.5px;background:#e3e4ec"></div>
<div class="a" style="left:341px;top:1038.4px;width:127.5px;height:39px;border-radius:5px;background:#fff;border:1.3px solid #cfd0da"></div>
<div class="t" style="left:350.80px;top:1051.03px;font-size:16.5px;line-height:16.5px;color:#212540;font-weight:700;letter-spacing:-0.174px;font-weight:700">10 per page</div>
<svg style="left:420px;top:1046px" width="44" height="24"><g stroke="#e6a3c9" stroke-width="1.6" stroke-linecap="round"><line x1="6" y1="5.5" x2="18" y2="17.5"/><line x1="18" y1="5.5" x2="6" y2="17.5"/></g><polygon points="28,10.8 37.2,10.8 32.6,17.2" fill="#e0a0c6"/></svg>
<div class="a" style="left:1333.6px;top:1038.3px;width:121px;height:39px;border-radius:6px;background:#fff;border:1.3px solid #dcdbe6"></div>
<svg style="left:1350px;top:1046px" width="20" height="24"><polyline points="13,5.9 7,12 13,18.2" fill="none" stroke="#a5176f" stroke-width="2" stroke-linecap="round" stroke-linejoin="round"/></svg>
<div class="t" style="left:1383.40px;top:1050.83px;font-size:15.8px;line-height:15.8px;color:#212540;font-weight:700;letter-spacing:-0.900px;transform:scaleX(0.9329);transform-origin:0 0;">Previous</div>
<div class="a" style="left:1469.3px;top:1037.3px;width:62.3px;height:41px;border-radius:6px;background:#fff;border:1.4px solid #8d8e9c"></div>
<div class="t" style="left:1509.00px;top:1048.76px;font-size:18px;line-height:18px;color:#5f6478;font-weight:400;letter-spacing:0.000px;">1</div>
<div class="t" style="left:1539.70px;top:1047.92px;font-size:19px;line-height:19px;color:#a0a3b0;font-weight:400;letter-spacing:0.900px;transform:scaleX(1.0916);transform-origin:0 0;">of</div>
<div class="t" style="left:1561.70px;top:1047.92px;font-size:19px;line-height:19px;color:#5f6478;font-weight:400;letter-spacing:-0.900px;transform:scaleX(0.9757);transform-origin:0 0;">27</div>
<div class="a" style="left:1597.7px;top:1038.3px;width:111px;height:39px;border-radius:6px;background:#fff;border:1.3px solid #dcdbe6"></div>
<div class="t" style="left:1618.00px;top:1050.23px;font-size:16.5px;line-height:16.5px;color:#212540;font-weight:700;letter-spacing:0.032px;">Next</div>
<svg style="left:1668px;top:1046px" width="20" height="24"><polyline points="7.5,5.9 13.5,12 7.5,18.2" fill="none" stroke="#a5176f" stroke-width="2" stroke-linecap="round" stroke-linejoin="round"/></svg>
</div></body></html>
